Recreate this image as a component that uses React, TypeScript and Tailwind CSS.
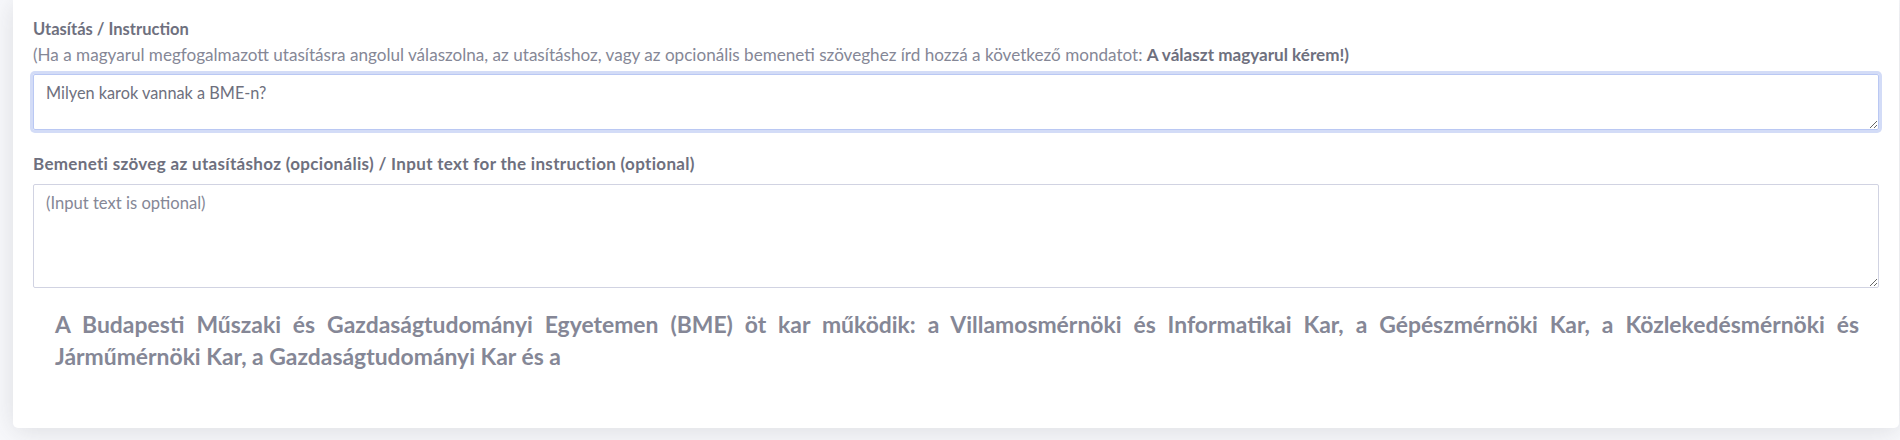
import React, { useEffect, useRef } from "react";

export default function App() {
  const ref = useRef<HTMLTextAreaElement>(null);
  useEffect(() => {
    const el = ref.current;
    if (el) {
      el.focus();
      const n = el.value.length;
      el.setSelectionRange(n, n);
    }
  }, []);
  const font = { fontFamily: "Lato, 'Noto Sans', sans-serif" };
  return (
    <div className="w-[1900px] h-[440px] bg-[#f8f9fc] overflow-hidden pl-[13px] pr-[1px]" style={font}>
      <div className="bg-white rounded-b-[5px] shadow-[0_0.15rem_1.75rem_0_rgba(58,59,69,0.15)] h-[428px] px-[20px] pt-[19px]">
        <div className="text-[16.5px] leading-[21px] font-bold text-[#6e707e]">Utasítás / Instruction</div>
        <div className="text-[17.1px] leading-[21px] text-[#858796] mt-[4px]">
          (Ha a magyarul megfogalmazott utasításra angolul válaszolna, az utasításhoz, vagy az opcionális bemeneti szöveghez írd hozzá a következő mondatot:{" "}
          <b className="font-bold text-[#6e707e]">A választ magyarul kérem!)</b>
        </div>
        <textarea
          ref={ref}
          defaultValue="Milyen karok vannak a BME-n?"
          className="block mt-[9px] w-full h-[56px] border border-[#bac8f3] rounded-[2px] px-[12px] py-[6px] text-[16.3px] leading-[24px] text-[#6e707e] outline-none shadow-[0_0_0_3px_rgba(78,115,223,0.25)] resize-y"
          style={font}
        />
        <div className="text-[17px] leading-[21px] font-bold text-[#6e707e] tracking-[0.32px] mt-[23px]">
          Bemeneti szöveg az utasításhoz (opcionális) / Input text for the instruction (optional)
        </div>
        <textarea
          placeholder="(Input text is optional)"
          className="block mt-[10px] w-full h-[104px] border border-[#d1d3e2] rounded-[2px] px-[12px] py-[6px] text-[16.6px] leading-[24px] text-[#6e707e] placeholder:text-[#858796] outline-none resize-y"
          style={font}
        />
        <div className="pl-[22px] pr-[20px] mt-[20px] text-[22.9px] leading-[32px] font-bold text-[#858796]">
          <div className="text-justify [text-align-last:justify]">
            A Budapesti Műszaki és Gazdaságtudományi Egyetemen (BME) öt kar működik: a Villamosmérnöki és Informatikai Kar, a Gépészmérnöki Kar, a Közlekedésmérnöki és
          </div>
          <div>Járműmérnöki Kar, a Gazdaságtudományi Kar és a</div>
        </div>
      </div>
    </div>
  );
}
